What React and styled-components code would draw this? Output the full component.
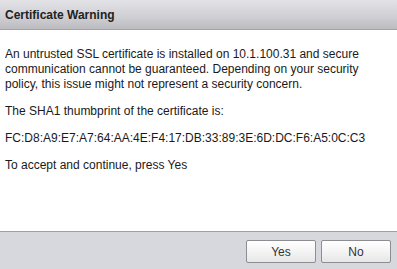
import styled, { createGlobalStyle } from "styled-components";

const GlobalStyle = createGlobalStyle`
  html, body {
    margin: 0;
    padding: 0;
    background: #ffffff;
  }
  body {
    font-family: "Liberation Sans", Arial, sans-serif;
  }
`;

function CertificateDialog({ className, host, thumbprint }) {
  return (
    <div className={className}>
      <Header>Certificate Warning</Header>
      <Body>
        <Paragraph>
          An untrusted SSL certificate is installed on {host} and secure
          <br />
          communication cannot be guaranteed. Depending on your security
          <br />
          policy, this issue might not represent a security concern.
        </Paragraph>
        <Paragraph>The SHA1 thumbprint of the certificate is:</Paragraph>
        <Paragraph>{thumbprint}</Paragraph>
        <Paragraph>To accept and continue, press Yes</Paragraph>
      </Body>
      <Footer>
        <Button>Yes</Button>
        <Button>No</Button>
      </Footer>
    </div>
  );
}

const CertificateDialogStyled = styled(CertificateDialog)`
  width: 397px;
  height: 269px;
  display: flex;
  flex-direction: column;
  background: #ffffff;
  overflow: hidden;
`;

const Header = styled.div`
  height: 29px;
  flex-shrink: 0;
  display: flex;
  align-items: center;
  padding-left: 5px;
  background: linear-gradient(to bottom, #e3e3e7 0%, #cfcfd3 60%, #bcbcc0 100%);
  border-bottom: 1px solid #a4a4a8;
  font-size: 12px;
  font-weight: bold;
  color: #222222;
`;

const Body = styled.div`
  flex: 1;
  padding: 17px 5px 0 5px;
`;

const Paragraph = styled.p`
  margin: 0 0 12px 0;
  font-size: 12px;
  line-height: 15px;
  color: #1a1a1a;
`;

const Footer = styled.div`
  height: 38px;
  flex-shrink: 0;
  display: flex;
  justify-content: flex-end;
  align-items: flex-start;
  gap: 5px;
  padding: 8px 6px 0 0;
  background: #d7d7de;
  border-top: 1px solid #a0a0a4;
  box-sizing: border-box;
`;

const Button = styled.button`
  width: 70px;
  height: 23px;
  padding: 0;
  background: linear-gradient(to bottom, #ffffff 0%, #f4f4f4 50%, #e6e6e8 100%);
  border: 1px solid #8e8e92;
  border-radius: 2px;
  font-family: "Liberation Sans", Arial, sans-serif;
  font-size: 12px;
  color: #333333;
`;

export default function App() {
  return (
    <>
      <GlobalStyle />
      <CertificateDialogStyled
        host="10.1.100.31"
        thumbprint="FC:D8:A9:E7:A7:64:AA:4E:F4:17:DB:33:89:3E:6D:DC:F6:A5:0C:C3"
      />
    </>
  );
}
